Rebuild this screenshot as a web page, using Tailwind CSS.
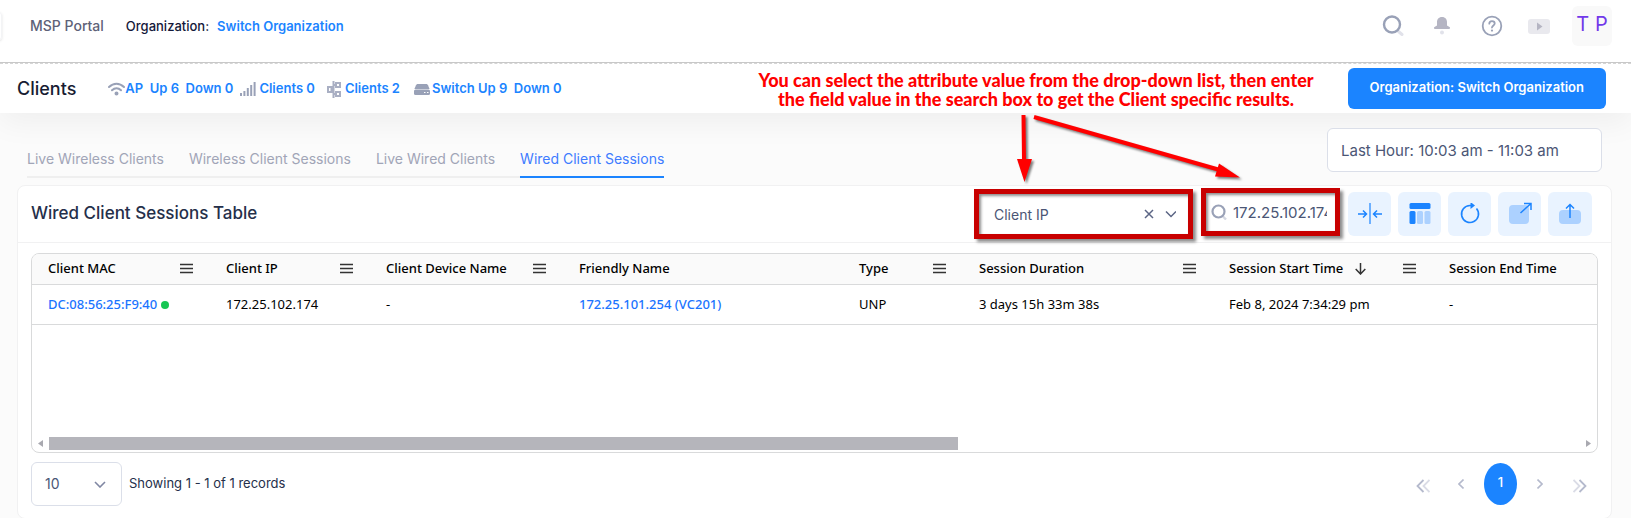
<!DOCTYPE html>
<html lang="en">
<head>
  <meta charset="UTF-8">
  <title>Wired Client Sessions</title>
  <meta name="viewport" content="width=device-width, initial-scale=1.0" />
  <script src="https://cdn.jsdelivr.net/npm/@tailwindcss/browser@4"></script>
</head>
<body class="relative min-h-screen overflow-hidden bg-[#fbfbfb] font-['Inter',sans-serif] text-[13px] text-[#181c32]">

  <!-- Top bar -->
  <header class="relative z-10 flex h-[62px] items-start justify-between bg-white pr-[19px] pl-[30px]">
    <div class="absolute top-3 -left-1 h-7 w-[6px] rounded border border-gray-100 shadow"></div>
    <nav class="flex items-center pt-4 leading-5">
      <a href="#" class="mr-[22px] text-[14px] font-medium text-[#5e6278]">MSP Portal</a>
      <span class="mr-2 font-medium text-[#14183a]">Organization:</span>
      <a href="#" class="font-semibold text-[#1b84ff]">Switch Organization</a>
    </nav>
    <div class="flex items-center pt-[6px]">
      <button aria-label="Search" class="mr-[29px]">
        <svg class="size-[22px]" viewBox="0 0 22 22" fill="none"><path d="M16.500 16.500l3.500 3" stroke="#e1e2ea" stroke-width="3" stroke-linecap="round"/><circle cx="10" cy="9.500" r="8" stroke="#99a1b7" stroke-width="2.400"/></svg>
      </button>
      <button aria-label="Notifications" class="mr-[30px]">
        <svg class="size-[18px]" viewBox="0 0 18 18"><path d="M9 0C5.600 0 4 2.500 4 5v3.500L1.500 10C.5 10.600.9 12 2 12h14c1.100 0 1.500-1.400.5-2L14 8.500V5c0-2.500-1.600-5-5-5z" fill="#b5b5c3"/><circle cx="9" cy="15.500" r="2" fill="#e1e2ea"/></svg>
      </button>
      <button aria-label="Help" class="mr-[25px]">
        <svg class="size-[22px]" viewBox="0 0 22 22" fill="none" stroke="#99a1b7" stroke-width="1.800" stroke-linecap="round"><circle cx="11" cy="11" r="9.300"/><path d="M8.300 8.700c0-1.700 1.200-2.600 2.700-2.600s2.700 1 2.700 2.400c0 1.900-2.500 1.900-2.700 4"/><path d="M11 15.500v.1" stroke-width="2.200"/></svg>
      </button>
      <button aria-label="Videos" class="mr-[22px]">
        <svg class="h-[15px] w-[22px]" viewBox="0 0 22 15"><rect width="22" height="15" rx="3" fill="#e9e9ee"/><path d="M9 3.500v8l5.500-4z" fill="#b5b5c3"/></svg>
      </button>
      <button class="size-10 rounded-md bg-[#f9f9f9] pb-1 text-[20px] leading-9 whitespace-nowrap text-[#7239ea]">T P</button>
    </div>
  </header>

  <!-- Page title and counters -->
  <div class="flex h-[51px] items-center justify-between border-t border-[#c8c8c8] bg-white pr-[25px] pl-[17px] shadow-[0_10px_30px_rgba(0,0,0,0.05)]">
    <div class="absolute top-[63px] right-0 left-0 border-t border-dashed border-[#d5d5d5]"></div>
    <div class="flex items-center pt-[2px]">
      <h1 class="mr-8 text-[18px] leading-6 font-medium">Clients</h1>
      <div class="flex items-center font-semibold whitespace-pre text-[#1b84ff]">
        <svg class="h-[14px] w-[17px]" viewBox="0 0 17 14" fill="none" stroke="#99a1b7" stroke-width="2" stroke-linecap="round"><path d="M1 5c4.500-4.500 10.500-4.500 15 0M4 8.200c2.700-2.500 6.300-2.500 9 0"/><circle cx="8.500" cy="11.500" r="1" fill="#99a1b7"/></svg>
        <span class="mr-[7px]">AP  Up 6  Down 0</span>
        <svg class="mr-[3px] h-[14px] w-4" viewBox="0 0 16 14" fill="#99a1b7"><path d="M0 11h2v3H0zM3.400 9h2v5h-2zM6.800 6h2v8h-2zM10.200 3h2v11h-2zM13.600 0h2v14h-2z"/></svg>
        <span class="mr-3">Clients 0</span>
        <svg class="mr-1 h-[17px] w-[14px]" viewBox="0 0 14 17" fill="none" stroke="#a9afc3" stroke-width="2"><path d="M1 6h3.500v5H1zM9 2h4v4H9zM9 11h4v4H9zM6.500 0v17M4.500 8.500h2M6.500 4H9M6.500 13H9"/></svg>
        <span class="mr-[14px]">Clients 2</span>
        <svg class="mr-[2px] h-[11px] w-4" viewBox="0 0 16 11"><path d="M4 0h8c1 0 1.500.5 2 1.300L15.600 5H.4L2 1.300C2.500.5 3 0 4 0z" fill="#99a1b7"/><rect y="5.500" width="16" height="5.500" rx="1.500" fill="#99a1b7"/><path d="M10 8.500h1.500M13 8.500h1.500" stroke="#fff"/></svg>
        <span>Switch Up 9  Down 0</span>
      </div>
    </div>
    <button class="h-[41px] rounded-md bg-[#1b84ff] px-[22px] font-semibold text-white">Organization: Switch Organization</button>
  </div>

  <!-- Tabs -->
  <div class="relative flex h-[72px] items-start justify-between pt-[15px] pr-[29px] pl-[27px]">
    <nav class="mt-5 flex gap-[25px] border-b-2 border-[#efefef] pb-[6px] text-[14px] leading-[22px] text-[#a1a5b7]">
      <a href="#">Live Wireless Clients</a>
      <a href="#">Wireless Client Sessions</a>
      <a href="#">Live Wired Clients</a>
      <a href="#" class="-mb-2 border-b-2 border-[#1b84ff] text-[#3e7bff]">Wired Client Sessions</a>
    </nav>
    <input aria-label="Time range" value="Last Hour: 10:03 am - 11:03 am" class="h-11 w-[275px] rounded-md border border-[#dbdfe9] bg-white px-[13px] text-[15px] text-[#4b5675]">
  </div>

  <!-- Sessions card -->
  <main class="mr-[19px] ml-[17px] rounded-lg border border-[#f1f1f2] bg-white">
    <div class="flex h-[57px] items-center justify-between border-b border-[#f1f1f2] pr-[19px] pl-[13px]">
      <h2 class="text-[17px] font-medium text-[#252f4a]">Wired Client Sessions Table</h2>
      <div class="flex items-center gap-2">
        <div class="relative h-[50px] w-[219px] border-[5px] border-[#c80000] shadow-[3px_3px_3px_rgba(0,0,0,0.45),inset_2px_2px_3px_rgba(0,0,0,0.45)]">
          <select aria-label="Attribute" class="h-full w-full appearance-none bg-transparent pl-[15px] text-[14px] text-[#4b5675]">
            <option>Client IP</option>
          </select>
          <svg class="pointer-events-none absolute top-[15px] right-3 h-[10px] w-8" viewBox="0 0 32 10" fill="none" stroke="#5b6585" stroke-width="1.500"><path d="M1 1l8 8M9 1L1 9"/><path d="M22 2.500l5 5 5-5"/></svg>
        </div>
        <div class="mb-1 flex h-12 w-[139px] items-center border-[5px] border-[#c80000] pr-2 pl-[5px] shadow-[3px_3px_3px_rgba(0,0,0,0.45),inset_2px_2px_3px_rgba(0,0,0,0.45)]">
          <svg class="mr-[6px] size-4 shrink-0" viewBox="0 0 16 16" fill="none"><path d="M12 12.500l3 3" stroke="#d5d8e2" stroke-width="2.400"/><circle cx="7.500" cy="7.500" r="6" stroke="#99a1b7" stroke-width="2.200"/></svg>
          <input aria-label="Search value" value="172.25.102.174" class="w-full min-w-0 pt-[2px] text-[15px] text-[#4b5675]">
        </div>
        <div class="flex gap-[7px]">
          <button aria-label="Fit columns" class="flex h-11 w-[43px] items-center justify-center rounded-md bg-[#e9f3ff]">
            <svg class="size-6" viewBox="0 0 24 24" fill="none" stroke="#1b84ff" stroke-width="1.500"><path d="M12 1v21" opacity=".8"/><path d="M0 12h8M5 8.500L8.500 12 5 15.500M24 12h-8M19 8.500L15.500 12l3.500 3.500"/></svg>
          </button>
          <button aria-label="Columns" class="flex h-11 w-[43px] items-center justify-center rounded-md bg-[#e9f3ff]">
            <svg class="size-[22px]" viewBox="0 0 22 22" fill="#1b84ff"><rect x=".5" y="0" width="21" height="6" rx="1.500"/><rect x=".5" y="8" width="6" height="13" rx="1.500"/><g fill="#acd1ff"><rect x="8" y="8" width="6" height="13" rx="1.500"/><rect x="15.500" y="8" width="6" height="13" rx="1.500"/></g></svg>
          </button>
          <button aria-label="Refresh" class="flex h-11 w-[43px] items-center justify-center rounded-md bg-[#e9f3ff]">
            <svg class="size-[22px]" viewBox="0 0 22 22" fill="none" stroke="#1b84ff" stroke-width="1.600"><path d="M17.500 5.500A8.500 8.500 0 1 1 11 2.500h2"/><path d="M11.500 -1v7l4.500-3.500z" fill="#1b84ff" stroke="none"/></svg>
          </button>
          <button aria-label="Open in window" class="flex h-11 w-[43px] items-center justify-center rounded-md bg-[#e9f3ff]">
            <svg class="size-6" viewBox="0 0 24 24" fill="none" stroke="#1b84ff" stroke-width="1.500"><rect x="1" y="3" width="20" height="19" rx="4" fill="#acd1ff" stroke="none"/><path d="M12.500 11L23 1.500M16 1.500h7V8"/></svg>
          </button>
          <button aria-label="Export" class="flex h-11 w-11 items-center justify-center rounded-md bg-[#e9f3ff]">
            <svg class="size-[22px]" viewBox="0 0 22 22" fill="none" stroke="#1b84ff" stroke-width="1.500"><rect x="0" y="7" width="22" height="14" rx="4" fill="#acd1ff" stroke="none"/><path d="M11 15V2M7 5.500l4-4 4 4"/></svg>
          </button>
        </div>
      </div>
    </div>

    <div class="mx-[13px] mt-[10px] overflow-hidden rounded-lg border border-[#d9dadb] font-['Noto_Sans',sans-serif] text-black">
      <table class="w-full table-fixed text-left text-[13px] whitespace-nowrap">
        <colgroup>
          <col class="w-[178px]"><col class="w-[160px]"><col class="w-[193px]"><col class="w-[280px]"><col class="w-[120px]"><col class="w-[250px]"><col class="w-[220px]"><col>
        </colgroup>
        <thead>
          <tr id="headRow" class="h-[30px] border-b border-[#d9dadb] bg-[#fafafa]"></tr>
        </thead>
        <tbody>
          <tr class="h-10 border-b border-[#d9dadb]">
            <td class="pt-[2px] pl-4"><a href="#" class="font-medium text-[#1b74ff]">DC:08:56:25:F9:40</a><span class="ml-1 inline-block size-2 rounded-full bg-[#17c653]"></span></td>
            <td class="pt-[2px] pl-4">172.25.102.174</td>
            <td class="pt-[2px] pl-4">-</td>
            <td class="pt-[2px] pl-4"><a href="#" class="font-medium text-[#1b74ff]">172.25.101.254 (VC201)</a></td>
            <td class="pt-[2px] pl-4">UNP</td>
            <td class="pt-[2px] pl-4">3 days 15h 33m 38s</td>
            <td class="pt-[2px] pl-4">Feb 8, 2024 7:34:29 pm</td>
            <td class="pt-[2px] pl-4">-</td>
          </tr>
        </tbody>
      </table>
      <div class="h-[112px]"></div>
      <!-- Horizontal scrollbar -->
      <div class="mb-[2px] flex h-[13px] items-center gap-[6px] px-[6px]">
        <svg class="h-[7px] w-[5px]" viewBox="0 0 5 7"><path d="M5 0v7L0 3.500z" fill="#a9a9b0"/></svg>
        <div class="h-full flex-1"><div class="h-full w-[59.4%] bg-[#b5b5bb]"></div></div>
        <svg class="h-[7px] w-[5px]" viewBox="0 0 5 7"><path d="M0 0v7l5-3.500z" fill="#a9a9b0"/></svg>
      </div>
    </div>

    <!-- Pager -->
    <div class="flex items-center justify-between px-[13px] pt-[9px] pb-3">
      <div class="flex items-center gap-[7px]">
        <div class="relative">
          <select aria-label="Rows per page" class="h-11 w-[91px] appearance-none rounded-md border border-[#dbdfe9] bg-white pl-[13px] text-[14px] text-[#4b5675]">
            <option>10</option>
          </select>
          <svg class="pointer-events-none absolute top-[19px] right-4 h-[7px] w-3" viewBox="0 0 12 7" fill="none" stroke="#8087a3" stroke-width="1.600"><path d="M1 1l5 5 5-5"/></svg>
        </div>
        <span class="text-[#252f4a]">Showing 1 - 1 of 1 records</span>
      </div>
      <div class="flex items-center pr-[11px] text-[#b5bacd]">
        <button aria-label="First page" class="mt-1 mr-7"><svg class="h-[14px] w-[14px]" viewBox="0 0 14 14" fill="none" stroke="currentColor" stroke-width="1.800"><path d="M7.500 1l-6 6 6 6"/><path d="M13.500 1l-6 6 6 6" opacity=".5"/></svg></button>
        <button aria-label="Previous page" class="mr-5"><svg class="h-[10px] w-[6px]" viewBox="0 0 6 10" fill="none" stroke="currentColor" stroke-width="1.600"><path d="M5.500.5L1 5l4.500 4.500"/></svg></button>
        <button class="h-[42px] w-[33px] rounded-[50%] bg-[#1b84ff] pb-[2px] font-medium text-white">1</button>
        <button aria-label="Next page" class="ml-5"><svg class="h-[10px] w-[6px]" viewBox="0 0 6 10" fill="none" stroke="currentColor" stroke-width="1.600"><path d="M.5.5L5 5 .5 9.500"/></svg></button>
        <button aria-label="Last page" class="mt-1 ml-[30px]"><svg class="h-[14px] w-[14px]" viewBox="0 0 14 14" fill="none" stroke="currentColor" stroke-width="1.800"><path d="M.5 1l6 6-6 6" opacity=".5"/><path d="M6.500 1l6 6-6 6"/></svg></button>
      </div>
    </div>
  </main>

  <!-- Callout text and arrows -->
  <p class="absolute top-[71px] left-[736px] w-[600px] text-center font-['Lato',sans-serif] text-[18px] leading-[19px] font-black text-[#ff0000]">You can select the attribute value from the drop-down list, then enter<br>the field value in the search box to get the Client specific results.</p>
  <svg class="pointer-events-none absolute top-[110px] left-[1010px] h-20 w-60 drop-shadow-[2px_2px_1px_rgba(0,0,0,0.5)]" viewBox="0 0 240 80" fill="#f00" stroke="#f00">
    <path d="M13.500 5l.5 46M24 7l186 53" stroke-width="4"/>
    <path d="M7 49h15l-7.500 23zM209 53.500l-4 13 25 1z" stroke="none"/>
  </svg>

  <script>
    // Column titles; menu = has a column menu, sort = sorted descending
    const columns = [
      { title: 'Client MAC', menu: true },
      { title: 'Client IP', menu: true },
      { title: 'Client Device Name', menu: true },
      { title: 'Friendly Name' },
      { title: 'Type', menu: true },
      { title: 'Session Duration', menu: true },
      { title: 'Session Start Time', menu: true, sort: true },
      { title: 'Session End Time' }
    ];

    const sortIcon = `<svg class="ml-3 h-3 w-[11px]" viewBox="0 0 11 12" fill="none" stroke="#333" stroke-width="1.500"><path d="M5.500 0v11M.7 6l4.800 5 4.800-5"/></svg>`;
    const menuIcon = `<button aria-label="Column menu" class="ml-auto"><svg class="h-[11px] w-[13px]" viewBox="0 0 13 11" stroke="#333" stroke-width="1.400"><path d="M0 1.500h13M0 5.500h13M0 9.500h13"/></svg></button>`;

    document.getElementById('headRow').innerHTML = columns.map(c => `
      <th class="pr-[17px] pl-4 font-medium">
        <div class="flex items-center">${c.title}${c.sort ? sortIcon : ''}${c.menu ? menuIcon : ''}</div>
      </th>`).join('');
  </script>
</body>
</html>
